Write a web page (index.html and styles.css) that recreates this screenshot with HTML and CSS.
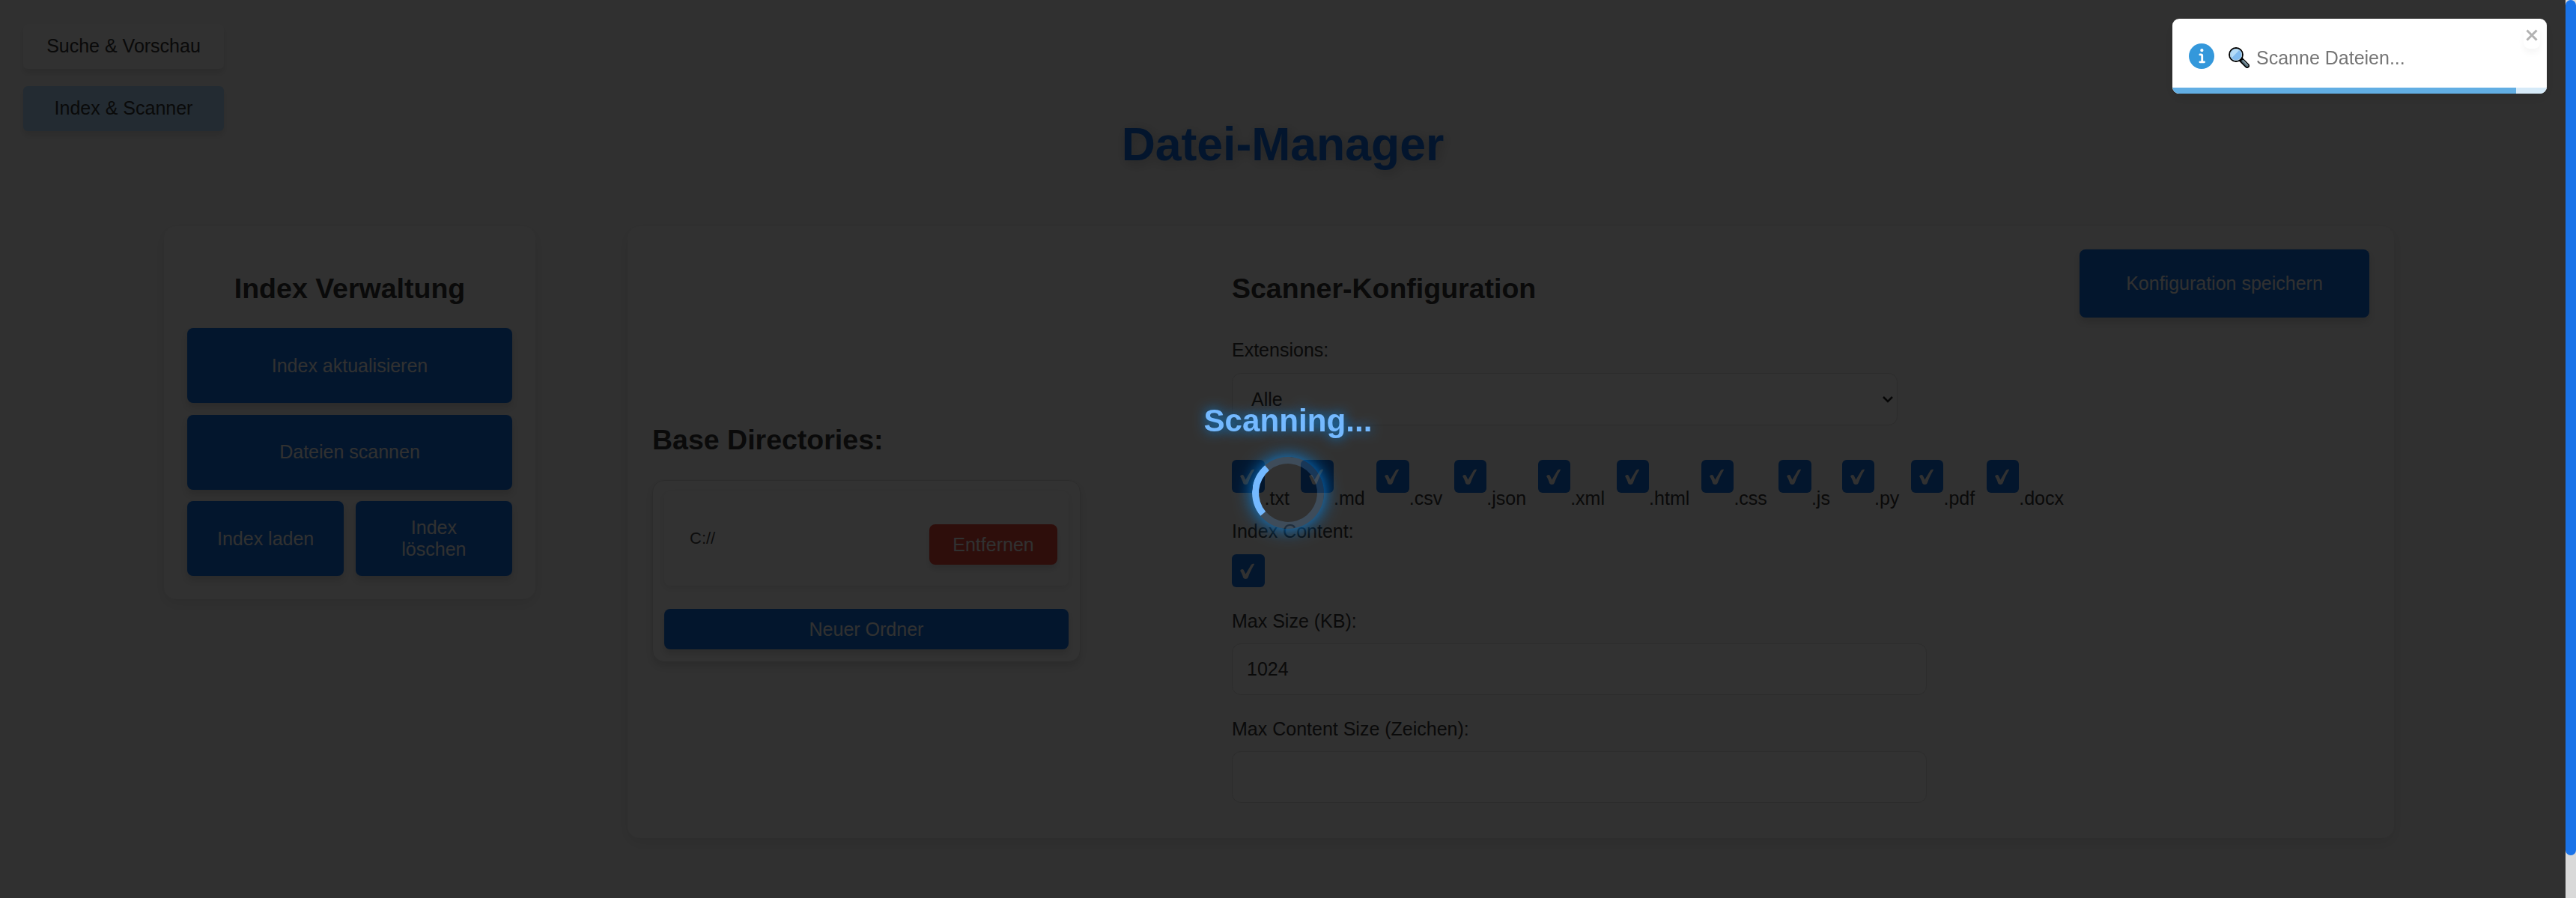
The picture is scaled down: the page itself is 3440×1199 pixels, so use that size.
FILE: index.html
```html
<!DOCTYPE html>
<html lang="de">
<head>
<meta charset="utf-8">
<title>Datei-Manager</title>
<link rel="stylesheet" href="styles.css">
</head>
<body>
<svg class="defs" width="0" height="0">
  <symbol id="check" viewBox="0 0 43.5 43.5"><path d="M11.2 22.2C11.6 20 14.8 19.2 15.9 21.2L18.4 26.6L25.4 14.8C26.6 12.9 28.4 12.6 30.2 13C26.9 18.8 24 24.2 21.9 30.4C21.1 33.4 16.4 33.8 15.2 31.2C14.2 27.8 13 25 11.2 22.2Z"/></symbol>
</svg>
<div class="page">
  <nav class="tabs">
    <button class="tab">Suche &amp; Vorschau</button>
    <button class="tab active">Index &amp; Scanner</button>
  </nav>
  <h1>Datei-Manager</h1>
  <main class="layout">
    <section class="card manage">
      <h2>Index Verwaltung</h2>
      <div class="actions">
        <button class="btn wide">Index aktualisieren</button>
        <button class="btn wide">Dateien scannen</button>
        <button class="btn">Index laden</button>
        <button class="btn">Index löschen</button>
      </div>
    </section>
    <section class="card scanner">
      <div class="dirs">
        <h2>Base Directories:</h2>
        <div class="dir-box">
          <div class="dir-item"><span>C://</span><button class="btn remove">Entfernen</button></div>
          <button class="btn add">Neuer Ordner</button>
        </div>
      </div>
      <div class="config">
        <h2>Scanner-Konfiguration</h2>
        <label>Extensions:</label>
        <div class="field select">Alle
          <svg width="14" height="10" viewBox="0 0 14 10"><path d="M1 2L7 8L13 2"/></svg>
        </div>
        <div class="exts">
          <div class="ext"><svg class="box"><use href="#check"/></svg><span>.txt</span></div>
          <div class="ext"><svg class="box"><use href="#check"/></svg><span>.md</span></div>
          <div class="ext"><svg class="box"><use href="#check"/></svg><span>.csv</span></div>
          <div class="ext"><svg class="box"><use href="#check"/></svg><span>.json</span></div>
          <div class="ext"><svg class="box"><use href="#check"/></svg><span>.xml</span></div>
          <div class="ext"><svg class="box"><use href="#check"/></svg><span>.html</span></div>
          <div class="ext"><svg class="box"><use href="#check"/></svg><span>.css</span></div>
          <div class="ext"><svg class="box"><use href="#check"/></svg><span>.js</span></div>
          <div class="ext"><svg class="box"><use href="#check"/></svg><span>.py</span></div>
          <div class="ext"><svg class="box"><use href="#check"/></svg><span>.pdf</span></div>
          <div class="ext"><svg class="box"><use href="#check"/></svg><span>.docx</span></div>
        </div>
        <label>Index Content:</label>
        <svg class="box single"><use href="#check"/></svg>
        <label>Max Size (KB):</label>
        <div class="field">1024</div>
        <label>Max Content Size (Zeichen):</label>
        <div class="field last"></div>
      </div>
      <button class="btn save">Konfiguration speichern</button>
    </section>
  </main>
</div>
<div class="overlay">
  <div class="scan-text">Scanning...</div>
  <div class="spinner"></div>
</div>
<div class="scrollbar"><div class="thumb"></div></div>
<div class="toast">
  <div class="toast-body">
    <svg class="info" viewBox="0 0 24 24"><path fill="#3498db" d="M12 0a12 12 0 1012 12A12.013 12.013 0 0012 0zm.25 5a1.5 1.5 0 11-1.5 1.5 1.5 1.5 0 011.5-1.5zm2.25 13.5h-4a1 1 0 010-2h.75a.25.25 0 00.25-.25v-4.5a.25.25 0 00-.25-.25h-.75a1 1 0 010-2h1a2 2 0 012 2v4.75a.25.25 0 00.25.25h.75a1 1 0 110 2z"/></svg>
    <svg class="magnifier" viewBox="0 0 28 28">
      <path d="M16 16L24.8 24.8" stroke="#000" stroke-width="6.4" stroke-linecap="round"/>
      <path d="M19 18.6L24.8 24.6" stroke="#546e7a" stroke-width="3.6" stroke-linecap="round"/>
      <path d="M19.6 18L25.3 23.8" stroke="#90a4ae" stroke-width="1.2" stroke-linecap="round"/>
      <circle cx="10" cy="10" r="9" fill="#82bcf0" stroke="#000" stroke-width="1.8"/>
      <circle cx="10" cy="10" r="7.6" fill="#82bcf0" stroke="#b9cfdb" stroke-width="1"/>
      <path d="M3 9A7 7 0 0 1 14 4.2L4.6 14A7 7 0 0 1 3 9Z" fill="#b5dcf8"/>
    </svg>
    <span>Scanne Dateien...</span>
  </div>
  <button class="close"><svg viewBox="0 0 16 16"><path d="M1.5 1.5L14.5 14.5M14.5 1.5L1.5 14.5"/></svg></button>
  <div class="progress"><div class="bar"></div></div>
</div>
</body>
</html>
```
FILE: styles.css
```css
* { box-sizing: border-box; }
html, body { height: 100%; margin: 0; overflow: hidden; }
body {
  background: #f0f0f0;
  color: #333;
  font: 25px/29px "Liberation Sans", Arial, sans-serif;
}
button { border: 0; padding: 0; margin: 0; font: inherit; color: inherit; }
.defs { position: absolute; }
.page { width: 3426px; height: 1199px; overflow: hidden; padding-top: 156px; }

.tabs {
  position: absolute; left: 31px; top: 32px; width: 268px;
  display: flex; flex-direction: column; gap: 23px;
}
.tab {
  height: 60px; padding-bottom: 1px; border-radius: 6px; background: #f2f2f2;
  box-shadow: 0 6px 9px rgba(0, 0, 0, .1);
}
.tab.active { background: #add6f7; }

h1 {
  margin: 0 0 74px; text-align: center; color: #0f6ce0;
  font-size: 62.5px; line-height: 72px;
  text-shadow: 3px 3px 16px rgba(0, 0, 0, .25);
}
h2 { margin: 31px 0; font-size: 37.5px; line-height: 43px; }

.layout { display: flex; align-items: flex-start; gap: 123px; padding-left: 219px; }
.card {
  padding: 31px; border-radius: 16px; background: #f2f2f2;
  box-shadow: 0 6px 19px rgba(0, 0, 0, .09);
}
.manage { width: 496px; height: 498px; }
.manage h2 { text-align: center; }
.actions { display: grid; grid-template-columns: 1fr 1fr; grid-auto-rows: 100px; gap: 15.5px; }
.btn {
  padding: 0 31px; border-radius: 8px; background: #106ee0; color: #f2f2f2;
  box-shadow: 0 6px 9px rgba(0, 0, 0, .12);
}
.wide { grid-column: span 2; }

.scanner { width: 2359px; height: 817px; display: flex; align-items: flex-start; padding-left: 33px; }
.dirs { width: 572px; align-self: center; }
.dirs h2 { margin: 29px 0 32px; }
.dir-box {
  height: 243px; padding: 14px 15px; border: 1px solid #ddd; border-radius: 16px; background: #f8f8f8;
  box-shadow: 0 6px 9px rgba(0, 0, 0, .1);
}
.dir-item {
  height: 126px; display: flex; align-items: center; justify-content: space-between;
  padding: 16px 15px 0 34px; border-radius: 8px; background: #fafafa;
  box-shadow: 0 3px 8px rgba(0, 0, 0, .08);
}
.dir-item span { font-size: 22px; color: #444; margin-top: -17px; }
.remove { width: 171px; height: 54px; background: #e7483a; }
.add { display: block; width: 100%; height: 54px; margin-top: 31px; }

.config { width: 1132px; margin-left: 202px; }
.config h2 { margin-bottom: 46px; }
label { display: block; }
.field {
  width: 928px; height: 69px; margin: 15px 0 31px; padding: 19px 19px;
  border: 1px solid #dcdcdc; border-radius: 12px; background: #f8f8f8;
}
.select {
  width: 889px; height: 70px; margin: 16px 0 46px; padding: 20px 5px 20px 25px;
  display: flex; justify-content: space-between; align-items: center;
}
.select svg { fill: none; stroke: #222; stroke-width: 2.6; }
.exts { display: flex; gap: 15.6px; margin-bottom: 15px; }
.ext { display: flex; }
.ext span { margin-top: 37px; }
.box { flex: none; display: block; width: 43.5px; height: 43.5px; border-radius: 6px; background: #106ee0; fill: #f2f2f2; }
.single { margin: 16px 0 31.5px; }
.save { width: 387px; height: 91px; }

.overlay {
  position: fixed; inset: 0; background: rgba(0, 0, 0, .8);
  display: flex; flex-direction: column; align-items: center; padding-top: 538px;
}
.scan-text {
  height: 48px; font-size: 42.2px; line-height: 48px; font-weight: bold;
  color: #74b9ff; text-shadow: 0 0 16px #0984e3;
}
.spinner {
  width: 96px; height: 96px; margin-top: 24px; border-radius: 50%;
  border: 9px solid rgba(116, 185, 255, .2); border-left-color: #74b9ff;
  box-shadow: 0 0 23px #0984e3; transform: rotate(5deg);
}

.scrollbar { position: fixed; top: 0; right: 0; width: 14px; height: 100%; background: #d9d9d9; }
.thumb { height: 1142px; border-radius: 8px; background: #1a73e8; }

.toast {
  position: fixed; left: 2901px; top: 25px; width: 500px; height: 100px;
  border-radius: 9px; overflow: hidden; background: #fff; color: #757575;
  box-shadow: 0 6px 19px rgba(0, 0, 0, .1);
}
.toast-body { display: flex; align-items: flex-start; padding: 33px 0 0 22px; }
.info { width: 34px; height: 34px; }
.magnifier { width: 28px; height: 28px; margin: 5px 9px 0 19px; fill: none; }
.toast-body span { margin-top: 5px; }
.close {
  position: absolute; right: 9px; top: 9px; width: 22px; height: 31px; padding: 5px 3px 10px;
  border-radius: 8px; background: transparent; box-shadow: 0 6px 9px rgba(0, 0, 0, .04);
}
.close svg { display: block; width: 16px; height: 16px; fill: none; stroke: #b2b2b2; stroke-width: 3; }
.progress { position: absolute; left: 0; bottom: 0; width: 100%; height: 8px; background: #d6eaf8; }
.bar { width: 458.5px; height: 8px; background: #62aee3; }
```
